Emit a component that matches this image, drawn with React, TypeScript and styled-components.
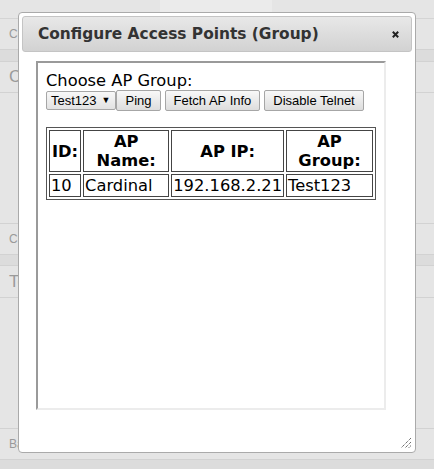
import React from 'react';
import styled, { createGlobalStyle } from 'styled-components';

const GlobalStyle = createGlobalStyle`
	html, body {
		margin: 0;
		padding: 0;
	}
	body {
		background: #e5e5e5;
		font-family: "DejaVu Sans", Verdana, sans-serif;
	}
`;

const Page = styled.div`
	position: relative;
	width: 434px;
	height: 469px;
	overflow: hidden;
	background: #e5e5e5;
	display: flex;
	flex-direction: column;
`;

const TabStrip = styled.div`
	height: 19px;
	box-sizing: border-box;
	border-bottom: 1px solid #d4d4d4;
	padding-left: 160px;
	flex-shrink: 0;
`;

const Tab = styled.div`
	width: 112px;
	height: 12px;
	background: #ebebeb;
`;

const Row = styled.div<{ $h: number; $big?: boolean }>`
	height: ${p => p.$h}px;
	box-sizing: border-box;
	flex-shrink: 0;
	border-bottom: 1px solid #d2d2d2;
	display: flex;
	align-items: center;
	padding-left: 9px;
	font-family: "Liberation Sans", Arial, sans-serif;
	font-size: ${p => (p.$big ? 17 : 12)}px;
	color: #9a9a9a;
`;

const Band = styled.div<{ $h: number }>`
	height: ${p => p.$h}px;
	box-sizing: border-box;
	flex-shrink: 0;
	background: #dcdcdc;
	border-bottom: 1px solid #d2d2d2;
`;

const Dialog = styled.div`
	position: absolute;
	left: 18px;
	top: 12px;
	width: 398px;
	height: 441px;
	box-sizing: border-box;
	background: #fff;
	border: 1px solid #aaa;
	border-radius: 4px;
	padding: 3px;
	display: flex;
	flex-direction: column;
`;

const TitleBar = styled.div`
	height: 36px;
	box-sizing: border-box;
	border: 1px solid #c4c4c4;
	border-radius: 3px;
	background: linear-gradient(#e8e8e8, #d2d2d2);
	display: flex;
	align-items: center;
	justify-content: space-between;
	padding: 0 12px 0 15px;
`;

const Title = styled.span`
	font-family: "DejaVu Sans", Verdana, sans-serif;
	font-weight: bold;
	font-size: 15.4px;
	color: #333;
`;

const CloseIcon = styled.svg`
	width: 7px;
	height: 7px;
	margin-top: 1px;
`;

const Content = styled.div`
	padding: 9px 0 0 14px;
`;

const Frame = styled.div`
	width: 350px;
	height: 349px;
	box-sizing: border-box;
	border: 2px solid;
	border-color: #9a9a9a #ececec #ececec #9a9a9a;
	padding: 8px;
	font-family: "DejaVu Sans", Verdana, sans-serif;
	font-size: 16.3px;
	color: #000;
`;

const Prompt = styled.div`
	line-height: 19px;
`;

const Toolbar = styled.div`
	display: flex;
	align-items: center;
	height: 21px;
`;

const SelectBox = styled.div`
	height: 19px;
	box-sizing: border-box;
	display: flex;
	align-items: center;
	gap: 5px;
	padding: 0 5px 0 4px;
	border: 1px solid #a6a6a6;
	border-radius: 2px;
	background: linear-gradient(#f8f8f8, #e2e2e2);
	font-family: "Liberation Sans", Arial, sans-serif;
	font-size: 13px;
	color: #000;
`;

const Arrow = styled.span`
	font-size: 9px;
	line-height: 1;
`;

const Button = styled.button<{ $gap?: boolean }>`
	height: 21px;
	box-sizing: border-box;
	margin: 0 0 0 ${p => (p.$gap ? 4 : 0)}px;
	padding: 0 8px;
	border: 1px solid #a6a6a6;
	border-radius: 2px;
	background: linear-gradient(#f8f8f8, #dddddd);
	font-family: "Liberation Sans", Arial, sans-serif;
	font-size: 13px;
	color: #000;
`;

const Table = styled.table`
	margin-top: 16px;
	border-collapse: separate;
	border-spacing: 2px;
	border: 1px solid #555;
	font-size: 16.3px;
`;

const Th = styled.th`
	border: 1px solid #444;
	padding: 1px 2px;
	text-align: center;
	font-weight: bold;
	line-height: 19px;
`;

const Td = styled.td`
	border: 1px solid #444;
	padding: 1px;
	line-height: 19px;
`;

const Grip = styled.svg`
	position: absolute;
	right: 3px;
	bottom: 3px;
	width: 12px;
	height: 12px;
`;

const aps = [{ id: 10, name: 'Cardinal', ip: '192.168.2.21', group: 'Test123' }];

export default function App() {
	return (
		<Page>
			<GlobalStyle />
			<TabStrip>
				<Tab />
			</TabStrip>
			<Row $h={31}>Controller</Row>
			<Band $h={12} />
			<Row $h={31} $big>
				Configuration
			</Row>
			<Row $h={131} />
			<Row $h={31}>Clients</Row>
			<Band $h={11} />
			<Row $h={32} $big>
				Tools
			</Row>
			<Row $h={131} />
			<Row $h={31}>Backup</Row>
			<Band $h={12} />

			<Dialog>
				<TitleBar>
					<Title>Configure Access Points (Group)</Title>
					<CloseIcon viewBox="0 0 7 7">
						<path d="M0.8 0.8L6.2 6.2M6.2 0.8L0.8 6.2" stroke="#222" strokeWidth="2" />
					</CloseIcon>
				</TitleBar>
				<Content>
					<Frame>
						<Prompt>Choose AP Group:</Prompt>
						<Toolbar>
							<SelectBox>
								Test123 <Arrow>▼</Arrow>
							</SelectBox>
							<Button>Ping</Button>
							<Button $gap>Fetch AP Info</Button>
							<Button $gap>Disable Telnet</Button>
						</Toolbar>
						<Table>
							<thead>
								<tr>
									<Th>ID:</Th>
									<Th>AP Name:</Th>
									<Th>AP IP:</Th>
									<Th>AP Group:</Th>
								</tr>
							</thead>
							<tbody>
								{aps.map(ap => (
									<tr key={ap.id}>
										<Td>{ap.id}</Td>
										<Td>{ap.name}</Td>
										<Td>{ap.ip}</Td>
										<Td>{ap.group}</Td>
									</tr>
								))}
							</tbody>
						</Table>
					</Frame>
				</Content>
				<Grip viewBox="0 0 12 12">
					<path d="M11 1L1 11M11 5L5 11M11 8.5L8.5 11" stroke="#333" strokeWidth="1" strokeDasharray="1 1" />
				</Grip>
			</Dialog>
		</Page>
	);
}
